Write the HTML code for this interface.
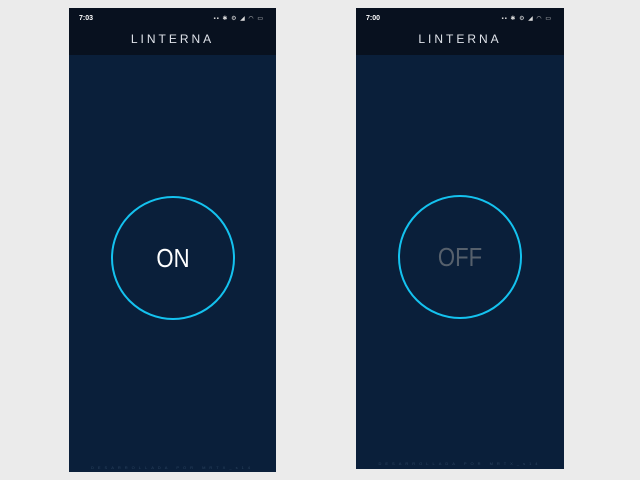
<!DOCTYPE html>
<html><head><style>
body{margin:0;width:640px;height:480px;background:#ebebeb;position:relative;overflow:hidden;font-family:"Liberation Sans",sans-serif}
.ph{position:absolute;background:#0a1f3a}
.hd{position:absolute;left:0;right:0;top:0;height:47px;background:#08111f}
.tm{position:absolute;left:10px;top:7px;color:#fff;font-size:7px;font-weight:bold}
.ic{position:absolute;right:12px;top:7px;color:#ddd;font-size:6px;letter-spacing:1px}
.tt{position:absolute;left:0;right:0;top:24px;text-align:center;color:#dfe3ea;font-size:12px;letter-spacing:3px}
.c{position:absolute;width:120px;height:120px;border:2px solid #14c2ef;border-radius:50%;box-sizing:content-box}
.c span{position:absolute;left:0;right:0;top:45px;text-align:center;font-size:26px;transform:scaleX(0.85)}
.ft{position:absolute;left:0;right:0;text-align:center;font-size:4px;color:#2c4460;letter-spacing:4px}
</style></head><body>
<div class="ph" style="left:69px;top:8px;width:207px;height:464px">
<div class="hd"><div class="tm">7:03</div><div class="ic">▪▪ ✱ ⚙ ◢ ◠ ▭</div><div class="tt">LINTERNA</div></div>
<div class="c" style="left:42px;top:188px"><span style="color:#fff">ON</span></div>
<div class="ft" style="top:457px">DESARROLLADA POR MRTX_s14</div>
</div>
<div class="ph" style="left:356px;top:8px;width:208px;height:461px">
<div class="hd"><div class="tm">7:00</div><div class="ic">▪▪ ✱ ⚙ ◢ ◠ ▭</div><div class="tt">LINTERNA</div></div>
<div class="c" style="left:42px;top:187px"><span style="color:#56606c">OFF</span></div>
<div class="ft" style="top:453px">DESARROLLADA POR MRTX_s14</div>
</div>
</body></html>
